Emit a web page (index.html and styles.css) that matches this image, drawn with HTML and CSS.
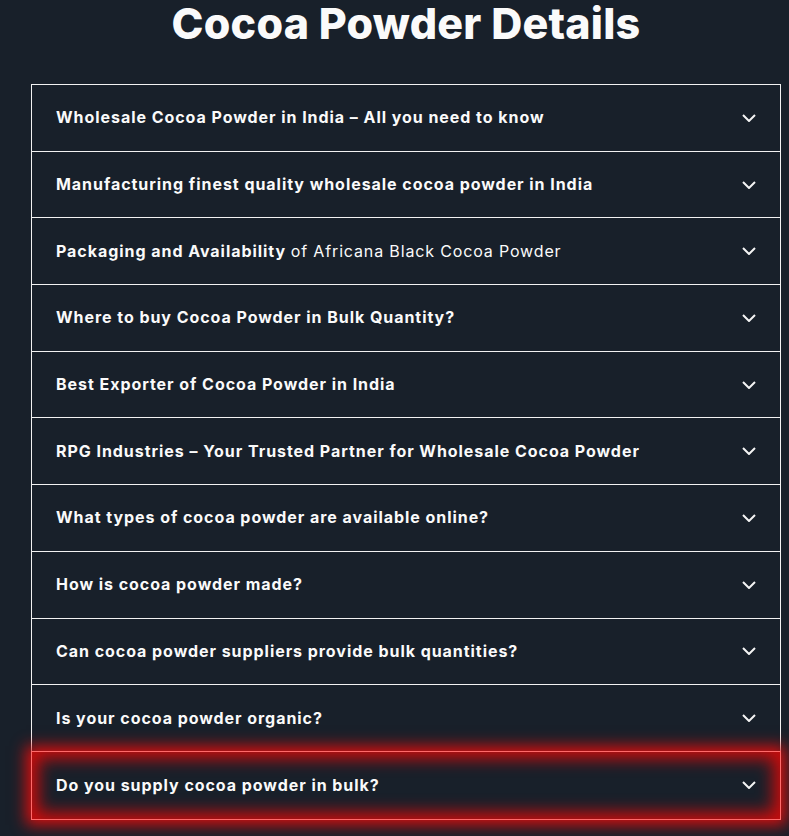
FILE: index.html
```html
<!DOCTYPE html>
<html lang="en">
<head>
<meta charset="utf-8">
<title>Cocoa Powder Details</title>
<link rel="stylesheet" href="styles.css">
</head>
<body>
<main class="page">
  <h2 class="title">Cocoa Powder Details</h2>
  <div class="faq">
    <div class="item"><span class="q">Wholesale Cocoa Powder in India – All you need to know</span><svg class="chev" viewBox="0 0 14 8"><path d="M1 1l6 6 6-6"/></svg></div>
    <div class="item"><span class="q">Manufacturing finest quality wholesale cocoa powder in India</span><svg class="chev" viewBox="0 0 14 8"><path d="M1 1l6 6 6-6"/></svg></div>
    <div class="item"><span class="q">Packaging and Availability <span class="light">of Africana Black Cocoa Powder</span></span><svg class="chev" viewBox="0 0 14 8"><path d="M1 1l6 6 6-6"/></svg></div>
    <div class="item"><span class="q">Where to buy Cocoa Powder in Bulk Quantity?</span><svg class="chev" viewBox="0 0 14 8"><path d="M1 1l6 6 6-6"/></svg></div>
    <div class="item"><span class="q">Best Exporter of Cocoa Powder in India</span><svg class="chev" viewBox="0 0 14 8"><path d="M1 1l6 6 6-6"/></svg></div>
    <div class="item"><span class="q">RPG Industries – Your Trusted Partner for Wholesale Cocoa Powder</span><svg class="chev" viewBox="0 0 14 8"><path d="M1 1l6 6 6-6"/></svg></div>
    <div class="item"><span class="q">What types of cocoa powder are available online?</span><svg class="chev" viewBox="0 0 14 8"><path d="M1 1l6 6 6-6"/></svg></div>
    <div class="item"><span class="q">How is cocoa powder made?</span><svg class="chev" viewBox="0 0 14 8"><path d="M1 1l6 6 6-6"/></svg></div>
    <div class="item"><span class="q">Can cocoa powder suppliers provide bulk quantities?</span><svg class="chev" viewBox="0 0 14 8"><path d="M1 1l6 6 6-6"/></svg></div>
    <div class="item"><span class="q">Is your cocoa powder organic?</span><svg class="chev" viewBox="0 0 14 8"><path d="M1 1l6 6 6-6"/></svg></div>
    <div class="item active"><span class="q">Do you supply cocoa powder in bulk?</span><svg class="chev" viewBox="0 0 14 8"><path d="M1 1l6 6 6-6"/></svg></div>
  </div>
</main>
</body>
</html>
```

FILE: styles.css
```css
html, body {
  margin: 0;
  padding: 0;
  background: #18202a;
  height: 100%;
  overflow: hidden;
}
body {
  font-family: "Inter", "DejaVu Sans", sans-serif;
  color: #fafafa;
}
.page {
  padding: 0 8px 0 31px;
}
.title {
  margin: 0;
  height: 84px;
  box-sizing: border-box;
  text-align: center;
  width: 750px;
  font-size: 43px;
  font-weight: 800;
  line-height: 46px;
  letter-spacing: 0.2px;
}
.faq {
  width: 750px;
  border: 1px solid #f2f2f2;
  box-sizing: border-box;
}
.item {
  display: flex;
  align-items: center;
  justify-content: space-between;
  height: 65.7px;
  padding: 0 24px;
  border-bottom: 1px solid #f2f2f2;
}
.item:last-child {
  border-bottom: none;
}
.q {
  font-size: 16px;
  font-weight: 700;
  letter-spacing: 0.95px;
  margin-top: -1px;
}
.light {
  font-weight: 400;
  letter-spacing: 0.85px;
}
.chev {
  width: 14px;
  height: 8px;
  fill: none;
  stroke: #f4f4f4;
  stroke-width: 2;
  flex: none;
}
.item.active {
  position: relative;
  margin: -1px;
  height: 66.7px;
  border: 1px solid #ff6a6a;
  box-shadow: 0 0 14px 5px #d60f0f, inset 0 0 16px 7px #c60d0d;
}
```
